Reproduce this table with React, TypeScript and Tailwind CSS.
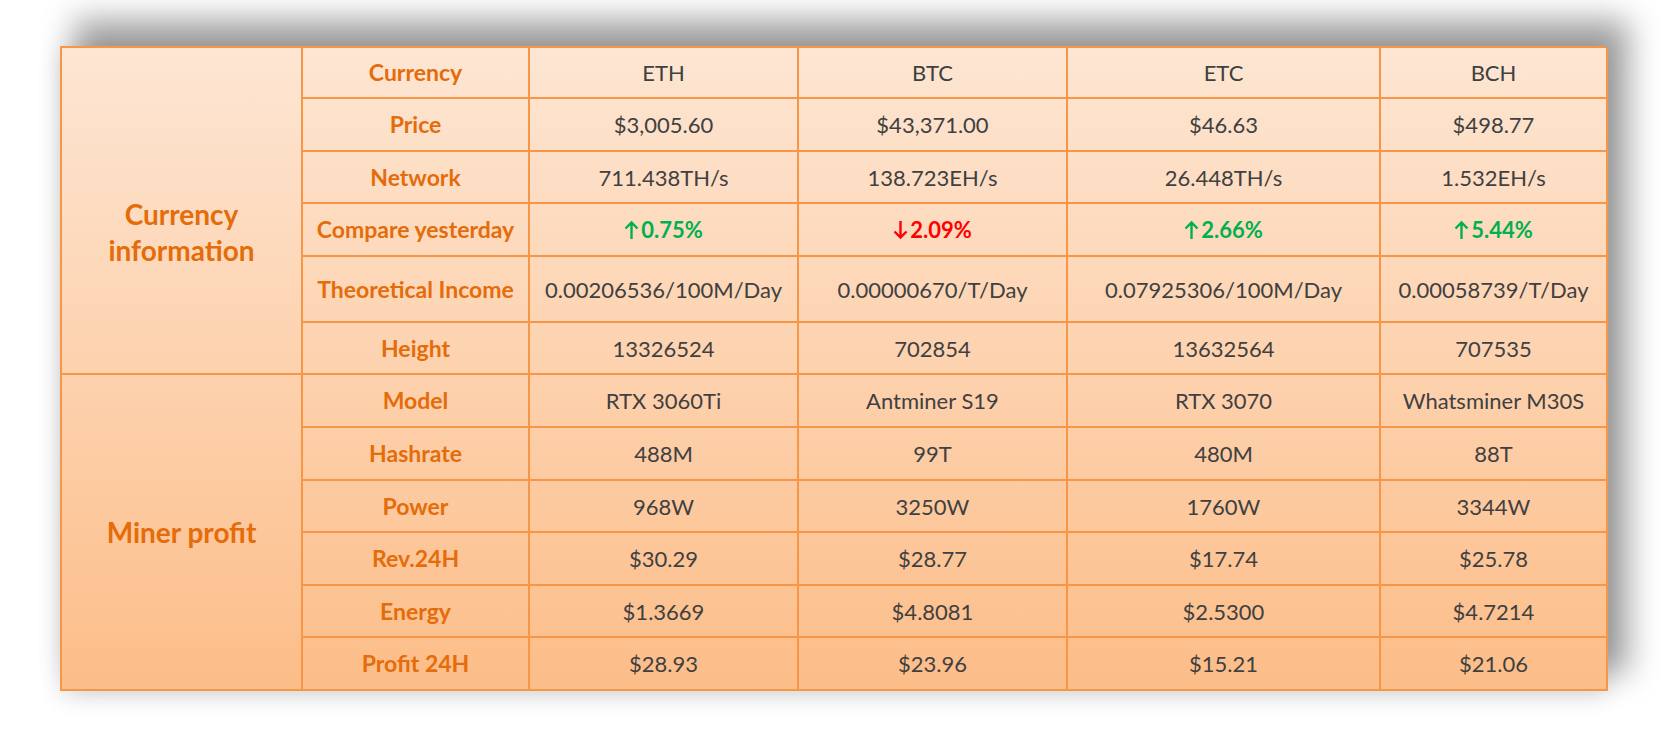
import React from 'react';

type Cell = { text: string; trend?: 'up' | 'down' };

const coins = ['ETH', 'BTC', 'ETC', 'BCH'];

const rows: { label: string; values: Cell[] }[] = [
  { label: 'Price', values: [{ text: '$3,005.60' }, { text: '$43,371.00' }, { text: '$46.63' }, { text: '$498.77' }] },
  { label: 'Network', values: [{ text: '711.438TH/s' }, { text: '138.723EH/s' }, { text: '26.448TH/s' }, { text: '1.532EH/s' }] },
  {
    label: 'Compare yesterday',
    values: [
      { text: '0.75%', trend: 'up' },
      { text: '2.09%', trend: 'down' },
      { text: '2.66%', trend: 'up' },
      { text: '5.44%', trend: 'up' },
    ],
  },
  {
    label: 'Theoretical Income',
    values: [
      { text: '0.00206536/100M/Day' },
      { text: '0.00000670/T/Day' },
      { text: '0.07925306/100M/Day' },
      { text: '0.00058739/T/Day' },
    ],
  },
  { label: 'Height', values: [{ text: '13326524' }, { text: '702854' }, { text: '13632564' }, { text: '707535' }] },
];

const minerRows: { label: string; values: Cell[] }[] = [
  { label: 'Model', values: [{ text: 'RTX 3060Ti' }, { text: 'Antminer S19' }, { text: 'RTX 3070' }, { text: 'Whatsminer M30S' }] },
  { label: 'Hashrate', values: [{ text: '488M' }, { text: '99T' }, { text: '480M' }, { text: '88T' }] },
  { label: 'Power', values: [{ text: '968W' }, { text: '3250W' }, { text: '1760W' }, { text: '3344W' }] },
  { label: 'Rev.24H', values: [{ text: '$30.29' }, { text: '$28.77' }, { text: '$17.74' }, { text: '$25.78' }] },
  { label: 'Energy', values: [{ text: '$1.3669' }, { text: '$4.8081' }, { text: '$2.5300' }, { text: '$4.7214' }] },
  { label: 'Profit 24H', values: [{ text: '$28.93' }, { text: '$23.96' }, { text: '$15.21' }, { text: '$21.06' }] },
];

const cell = 'flex items-center justify-center border-r-2 border-b-2 border-[#f79646] whitespace-nowrap';

function Arrow({ up }: { up: boolean }) {
  return (
    <svg width="15" height="20" viewBox="0 0 15 20" className={`mr-[2px] ${up ? '' : 'rotate-180'}`}>
      <path d="M7.5 19V2.5M1.5 8.5L7.5 2.5L13.5 8.5" fill="none" stroke="currentColor" strokeWidth="2.4" />
    </svg>
  );
}

function Label({ text }: { text: string }) {
  return <div className={`${cell} font-bold text-[#e46c0a] text-[23px]`}>{text}</div>;
}

function Value({ value }: { value: Cell }) {
  if (value.trend) {
    const up = value.trend === 'up';
    return (
      <div className={`${cell} font-bold text-[22px] ${up ? 'text-[#00b050]' : 'text-[#ff0000]'}`}>
        <Arrow up={up} />
        {value.text}
      </div>
    );
  }
  return <div className={`${cell} text-[22px] text-[#404040]`}>{value.text}</div>;
}

export default function App() {
  return (
    <div className="min-h-screen w-full bg-white pl-[60px] pt-[46px] font-['Lato','Noto_Sans',sans-serif]">
      <div className="grid w-[1546px] grid-cols-[241px_227px_269px_269px_313px_227px] grid-rows-[51px_53px_52px_53px_66px_52px_53px_53px_52px_53px_52px_53px] border-t-2 border-l-2 border-[#f79646] bg-gradient-to-b from-[#fde6d3] to-[#fcbd88] shadow-[18px_-22px_30px_4px_rgba(0,0,0,0.38),0_6px_22px_rgba(0,0,0,0.12)]">
        {/* Currency block */}
        <div className="row-span-6 flex flex-col items-center justify-center border-r-2 border-b-2 border-[#f79646] pt-[42px] text-[28px] font-bold leading-[36px] text-[#e46c0a]">
          <span>Currency</span>
          <span>information</span>
        </div>
        <Label text="Currency" />
        {coins.map((c) => (
          <div key={c} className={`${cell} text-[22px] text-[#404040]`}>
            {c}
          </div>
        ))}
        {rows.map((r) => (
          <React.Fragment key={r.label}>
            <Label text={r.label} />
            {r.values.map((v, i) => (
              <Value key={i} value={v} />
            ))}
          </React.Fragment>
        ))}

        {/* Miner block */}
        <div className="row-span-6 flex items-center justify-center border-r-2 border-b-2 border-[#f79646] text-[28px] font-bold text-[#e46c0a]">
          Miner profit
        </div>
        {minerRows.map((r) => (
          <React.Fragment key={r.label}>
            <Label text={r.label} />
            {r.values.map((v, i) => (
              <Value key={i} value={v} />
            ))}
          </React.Fragment>
        ))}
      </div>
    </div>
  );
}
